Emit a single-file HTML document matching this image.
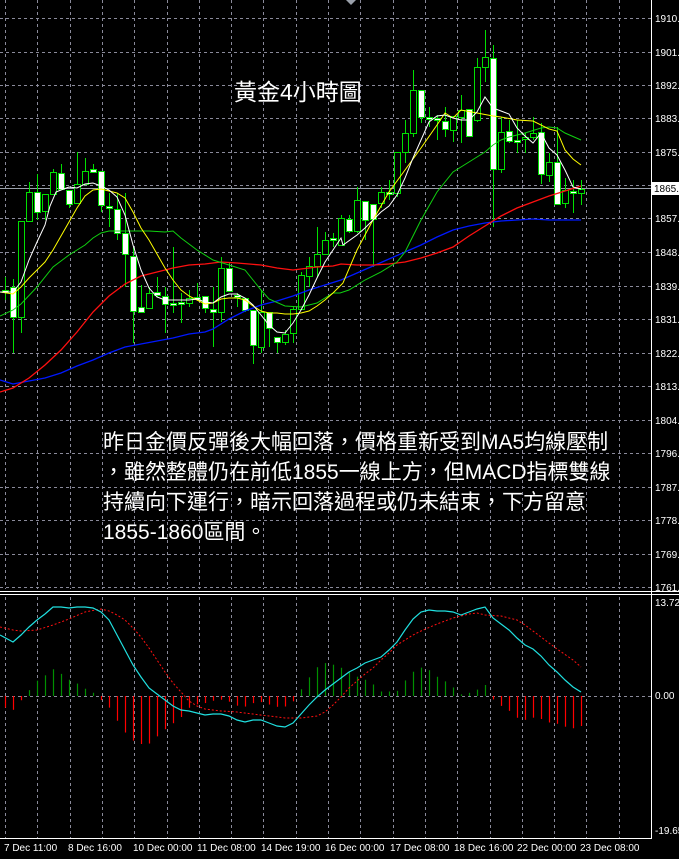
<!DOCTYPE html>
<html><head><meta charset="utf-8">
<style>
html,body{margin:0;padding:0;background:#000;width:679px;height:859px;overflow:hidden}
svg{display:block}
.t{font-family:"Liberation Sans",Tahoma,sans-serif;font-size:10px;fill:#fff}
.txt{position:absolute;left:103px;top:428px;color:#fff;font-family:"Liberation Sans","Noto Sans CJK TC",sans-serif;font-size:21px;line-height:30px;white-space:nowrap}
.title{position:absolute;left:234px;top:73px;color:#fff;font-family:"Liberation Sans","Noto Sans CJK TC",sans-serif;font-size:23px;white-space:nowrap}
</style></head><body>
<svg id="s" width="679" height="859" xmlns="http://www.w3.org/2000/svg"></svg>
<div class="title">黃金4小時圖</div>
<div class="txt">昨日金價反彈後大幅回落，價格重新受到MA5均線壓制<br>，雖然整體仍在前低1855一線上方，但MACD指標雙線<br>持續向下運行，暗示回落過程或仍未結束，下方留意<br>1855-1860區間。</div>
<script>
var s=document.getElementById('s'),h='';
function L(x1,y1,x2,y2,c,extra){h+='<line x1="'+x1+'" y1="'+y1+'" x2="'+x2+'" y2="'+y2+'" stroke="'+c+'" '+(extra||'')+'/>';}
var gx=[];for(var x=5;x<650;x+=32.3)gx.push(Math.round(x)+0.5);
gx.forEach(function(x){L(x,0,x,589,'#8a8a9a','stroke-dasharray="3,3"');L(x,597,x,838,'#8a8a9a','stroke-dasharray="3,3"');});
var py=[18,52,85,118,152,185,218,252,286,319,353,386,420,453,487,520,554,587];
var pl=['1910.','1901.','1892.','1883.','1875.','1866.','1857.','1848.','1839.','1831.','1822.','1813.','1804.','1796.','1787.','1778.','1769.','1761.'];
py.forEach(function(y){L(0,y+.5,651,y+.5,'#8a8a9a','stroke-dasharray="3,3"');});
L(0,696.5,651,696.5,'#8a8a9a','stroke-dasharray="3,3"');
L(0,591.5,679,591.5,'#fff');L(0,594.5,679,594.5,'#fff');
L(651.5,0,651.5,838,'#fff');L(0,838.5,652,838.5,'#fff');
py.forEach(function(y,i){if(i!=5)h+='<text class="t" x="655" y="'+(y+4)+'">'+pl[i]+'</text>';});
L(0,188.5,651,188.5,'#9aa0aa');
h+='<rect x="652" y="182" width="27" height="13" fill="#fff"/><text class="t" x="654" y="192" style="fill:#000">1865.</text>';
h+='<polygon points="346,0 356,0 351,5" fill="#9aa0aa"/>';
var c=[[290,292,277,300,1],[287,317,279,353,1],[221,317,221,333,0],[192,221,182,221,0],[192,212,174,220,1],[194,211,194,220,0],[172,194,169,194,0],[173,189,164,189,1],[190,204,190,208,1],[184,203,152,203,0],[171,184,158,184,0],[169,172,164,172,1],[171,205,171,212,1],[206,208,193,227,1],[209,233,193,240,1],[233,254,193,287,1],[256,311,247,343,1],[307,312,285,313,1],[293,308,287,308,0],[292,295,277,297,1],[296,304,287,333,1],[303,304,247,313,1],[302,303,293,323,1],[298,303,290,307,0],[297,298,283,300,1],[296,308,296,313,1],[309,312,287,347,1],[268,312,257,322,0],[268,291,262,291,1],[295,296,293,307,1],[298,310,298,312,1],[310,345,310,364,1],[312,347,290,353,0],[312,328,312,347,1],[337,342,337,353,1],[334,342,330,345,0],[309,333,307,343,0],[275,309,272,310,0],[266,276,257,287,0],[254,266,227,277,0],[240,254,232,254,0],[238,240,233,247,1],[218,245,215,245,0],[219,231,215,233,1],[200,231,187,233,0],[201,220,201,240,1],[204,219,204,267,1],[192,203,187,208,0],[192,193,180,200,1],[152,193,152,197,0],[133,152,120,163,0],[90,133,70,137,0],[90,117,90,123,1],[117,119,107,127,1],[118,120,115,140,1],[121,129,107,137,1],[116,130,116,142,0],[110,117,95,143,0],[109,136,109,137,1],[67,120,58,122,0],[57,67,30,82,0],[58,169,45,227,1],[132,169,117,173,0],[131,141,120,143,1],[140,142,120,153,1],[137,139,133,153,0],[133,137,117,140,0],[132,174,123,184,1],[162,175,153,182,0],[162,204,127,205,1],[190,203,178,208,0],[191,193,180,213,1],[189,193,180,205,0]];
c.forEach(function(k,i){var x=5+8*i;L(x+.5,k[2],x+.5,k[3],'#00e000');
var bh=Math.max(k[1]-k[0],2);h+='<rect x="'+(x-2.5)+'" y="'+(k[0]+.5)+'" width="6" height="'+bh+'" fill="'+(k[4]?'#fff':'#000')+'" stroke="#00e000"/>';});
function P(pts,col,w,extra){h+='<polyline fill="none" stroke="'+col+'" stroke-width="'+(w||1)+'" '+(extra||'')+' points="'+pts+'"/>';}
P('0,380 13,384 29,381 45,378 61,373 77,366 93,360 109,353 125,347 141,344 157,341 173,338 189,334 205,332 213,329 229,319 245,311 261,305 277,301 293,296 309,290 325,285 341,280 357,273 373,266 389,259 405,252 421,245 437,237 453,230 469,226 485,223 501,221 517,220 533,219 549,220 565,220 581,220','#0018ff',1.3);
P('0,392 13,388 29,378 45,365 61,350 77,332 93,312 109,296 125,284 141,276 157,272 173,268 189,265 205,264 221,262 237,263 261,265 277,268 293,270 301,269 317,267 333,266 341,264 357,265 373,265 389,264 405,262 421,258 437,253 453,247 469,236 485,226 501,216 517,208 533,202 549,196 565,191 581,186','#ff1010',1.3);
P('0,316 13,310 21,304 37,287 53,267 69,255 85,245 93,238 101,233 109,231 125,231 149,231 165,232 173,231 181,238 197,250 213,260 229,265 245,270 261,290 269,299 285,306 301,307 317,303 333,293 340,293 349,290 365,280 381,272 397,262 405,252 413,236 421,220 437,192 453,172 469,162 485,152 493,145 501,140 509,137 525,133 541,128 549,127 557,128 565,133 581,140','#10d010');
P('0,292 13,294 21,287 29,278 37,270 45,262 53,250 61,236 69,222 77,208 85,196 93,190 101,189 109,191 117,193 125,198 133,212 141,228 149,240 157,254 165,268 173,280 181,290 189,296 197,300 205,304 213,303 221,299 229,298 237,298 245,300 253,306 261,311 269,313 277,313 285,314 293,314 301,313 309,311 317,306 325,300 333,293 341,285 343,283 357,250 373,220 389,192 405,170 421,148 437,125 445,113 453,118 461,110 477,113 493,116 501,117 517,120 533,121 549,129 557,131 565,150 573,159 581,165','#ffff00');
P('0,292 13,292 21,282 29,260 37,242 45,225 50,206 56,192 61,190 69,187 77,188 85,184 93,183 101,186 109,190 117,197 125,215 133,245 141,270 149,288 157,297 165,300 173,300 181,300 189,300 197,299 205,302 213,303 221,297 229,294 237,294 245,298 253,305 261,315 269,325 277,332 285,333 293,323 301,310 309,295 317,278 325,262 333,250 341,238 343,245 357,235 365,228 373,220 381,212 389,206 397,195 405,178 413,158 421,140 429,122 437,116 445,115 453,118 461,120 469,120 477,112 485,97 493,108 501,111 509,114 517,128 525,136 533,143 541,133 549,148 557,155 565,170 573,187 581,189','#fff');
var cy=[[0,635],[13,642],[21,635],[29,627],[37,620],[45,614],[53,607],[61,607],[69,608],[77,607],[85,607],[93,608],[101,612],[109,620],[117,635],[125,650],[133,665],[141,677],[149,688],[157,694],[165,700],[173,706],[181,710],[189,711],[197,713],[205,715],[213,714],[221,714],[229,716],[237,720],[245,722],[253,720],[261,720],[269,723],[277,726],[285,727],[293,723],[301,714],[309,705],[317,697],[325,690],[333,684],[341,678],[349,672],[357,668],[365,663],[373,660],[381,657],[389,650],[397,642],[405,630],[413,619],[421,612],[429,610],[437,611],[445,611],[453,612],[461,615],[469,612],[477,609],[485,607],[493,618],[501,624],[509,630],[517,638],[525,645],[533,649],[541,656],[549,665],[557,672],[565,680],[573,687],[581,692]];
var sg=[[0,627],[13,630],[21,631],[37,630],[53,625],[69,619],[85,612],[101,609],[109,611],[117,615],[125,620],[133,628],[141,637],[149,648],[157,660],[165,672],[173,683],[181,692],[189,701],[197,706],[205,709],[221,711],[237,712],[253,714],[269,716],[285,718],[301,718],[317,716],[325,712],[333,705],[341,697],[349,688],[357,681],[365,674],[373,668],[381,660],[389,653],[397,645],[405,640],[413,635],[421,631],[437,624],[453,618],[469,614],[477,613],[485,615],[501,616],[517,620],[525,625],[541,637],[557,649],[573,660],[581,667]];
function itp(a,x){for(var i=1;i<a.length;i++)if(x<=a[i][0]){var t=(x-a[i-1][0])/(a[i][0]-a[i-1][0]);return a[i-1][1]+t*(a[i][1]-a[i-1][1]);}return a[a.length-1][1];}
for(var i=0;i<73;i++){var x=5+8*i+.5,d=itp(cy,x)-itp(sg,x);
var hh=Math.abs(d)*(d>0?1.2:1.5);if(hh<1.5)continue;L(x,696,x,696+(d>0?hh:-hh),d>0?'#ff0000':'#009000','stroke-width="1.2"');}
P(sg.map(function(p){return p.join(',')}).join(' '),'#ff1010',1,'stroke-dasharray="2,2"');
P(cy.map(function(p){return p.join(',')}).join(' '),'#20e0e0',1.2);
h+='<text class="t" x="655" y="606">13.72</text><text class="t" x="655" y="699">0.00</text><text class="t" x="655" y="834">-19.65</text>';
var tl=[[4,'7 Dec 11:00'],[68,'8 Dec 16:00'],[133,'10 Dec 00:00'],[197,'11 Dec 08:00'],[261,'14 Dec 19:00'],[325,'16 Dec 00:00'],[390,'17 Dec 08:00'],[454,'18 Dec 16:00'],[517,'22 Dec 00:00'],[580,'23 Dec 08:00']];
tl.forEach(function(t){h+='<text class="t" x="'+t[0]+'" y="851">'+t[1]+'</text>';});
s.innerHTML=h;
</script>
</body></html>
